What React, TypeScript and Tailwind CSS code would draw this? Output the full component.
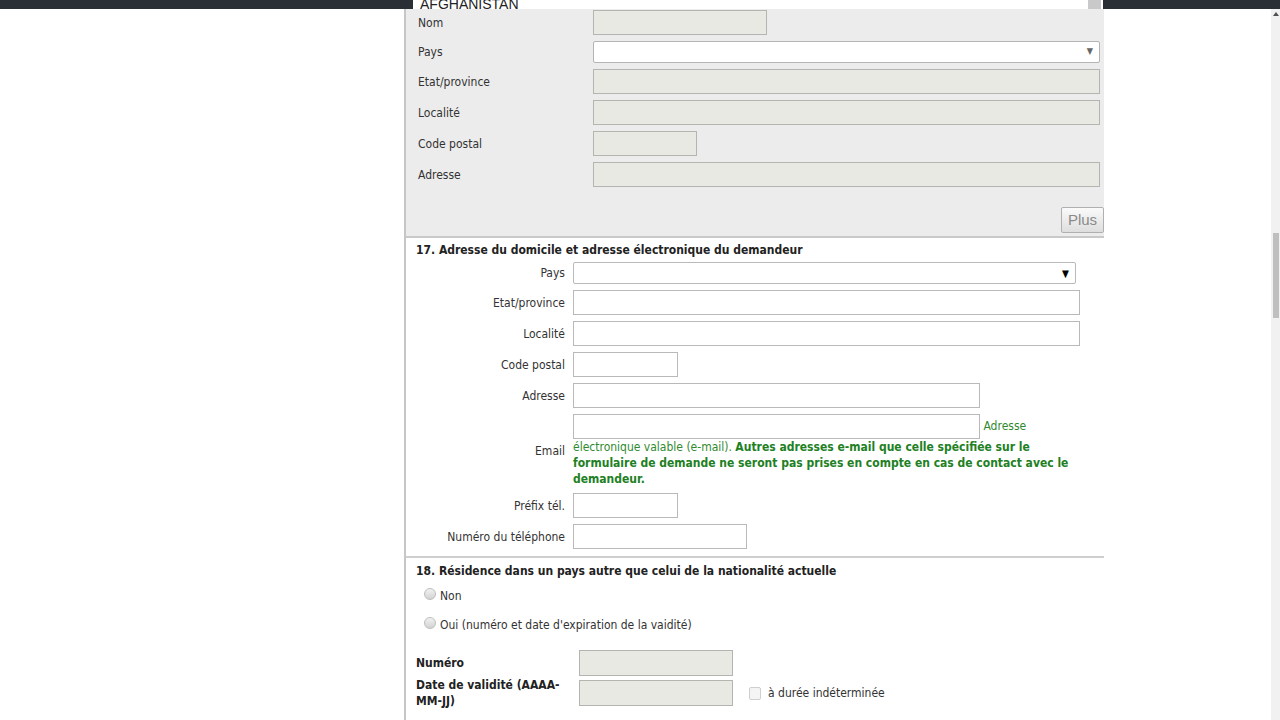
import React from "react";

const FONT = "font-['DejaVu_Sans_Condensed','DejaVu_Sans',sans-serif]";

interface FieldProps {
  w: number;
  h?: number;
  disabled?: boolean;
}

// plain text box, sized by pixel width from the form
const Field = ({ w, h = 25, disabled }: FieldProps) => {
  const widths: Record<number, string> = {
    104: "w-[104px]",
    105: "w-[105px]",
    154: "w-[154px]",
    174: "w-[174px]",
    407: "w-[407px]",
    507: "w-[507px]",
  };
  const heights: Record<number, string> = {
    22: "h-[22px]",
    25: "h-[25px]",
    26: "h-[26px]",
  };
  return (
    <div
      className={`${widths[w]} ${heights[h]} shrink-0 border ${
        disabled ? "bg-[#e9e9e3] border-[#b4b4b0]" : "bg-white border-[#b9b9b9]"
      }`}
    />
  );
};

const SelectBox = ({ dark }: { dark?: boolean }) => (
  <div
    className={`flex h-[22px] shrink-0 items-center justify-end rounded-[2px] border bg-white ${
      dark
        ? "w-[503px] border-[#b9b9b9] pr-[6px] text-[10px] text-black"
        : "w-[507px] border-[#b4b4b4] pr-[6px] text-[9px] text-[#666]"
    }`}
  >
    ▼
  </div>
);

const TopRow = ({ label, children }: { label: string; children: React.ReactNode }) => (
  <div className="flex items-center">
    <div className="w-[175px] text-[12px] text-[#333]">{label}</div>
    {children}
  </div>
);

const Row = ({ label, children }: { label: string; children: React.ReactNode }) => (
  <div className="flex items-center">
    <div className="w-[159px] shrink-0 text-right text-[12px] text-[#333]">{label}</div>
    <div className="ml-[8px]">{children}</div>
  </div>
);

const Radio = () => (
  <span className="mb-[4px] inline-block h-[12px] w-[12px] shrink-0 rounded-full border border-[#bdbdbd] bg-gradient-to-b from-[#f2f2f2] to-[#d2d2d2]" />
);

export default function App() {
  return (
    <div className={`flex h-[720px] w-[1280px] flex-col overflow-hidden bg-white ${FONT}`}>
      {/* dark strip with the open country list peeking through */}
      <div className="flex h-[9px] shrink-0 bg-[#2a2e35]">
        <div className="ml-[413px] flex w-[690px] overflow-hidden bg-white">
          <div className="-mt-[4px] pl-[7px] font-['Liberation_Sans',sans-serif] text-[14px] leading-[16px] text-[#222]">
            AFGHANISTAN
          </div>
          <div className="ml-auto mr-[2px] w-[13px] bg-[#c9c9c9]" />
        </div>
      </div>

      <div className="flex min-h-0 flex-1">
        <div className="w-[404px] shrink-0" />

        <div className="w-[700px] shrink-0 border-l-2 border-[#c6c6c6]">
          {/* co-applicant block (disabled) */}
          <div className="border-b-2 border-[#c9c9c9] bg-[#ececec] pb-[3px] pl-[12px] pt-[1px]">
            <div className="flex flex-col gap-[6px]">
              <TopRow label="Nom">
                <Field w={174} disabled />
              </TopRow>
              <TopRow label="Pays">
                <SelectBox />
              </TopRow>
              <TopRow label="Etat/province">
                <Field w={507} disabled />
              </TopRow>
              <TopRow label="Localité">
                <Field w={507} disabled />
              </TopRow>
              <TopRow label="Code postal">
                <Field w={104} disabled />
              </TopRow>
              <TopRow label="Adresse">
                <Field w={507} disabled />
              </TopRow>
            </div>
            <div className="mt-[20px] flex justify-end">
              <button className="h-[26px] w-[43px] rounded-[2px] border border-[#b0b0b0] bg-gradient-to-b from-[#fafafa] to-[#dedede] font-['Liberation_Sans',sans-serif] text-[15px] text-[#8a8a8a]">
                Plus
              </button>
            </div>
          </div>

          {/* 17 */}
          <div className="border-b-2 border-[#cfcfcf] pb-[7px] pt-[5px]">
            <div className="mb-[4px] pl-[10px] text-[12px] font-bold leading-[15px] text-[#222]">
              17. Adresse du domicile et adresse électronique du demandeur
            </div>
            <div className="flex flex-col gap-[6px]">
              <Row label="Pays">
                <SelectBox dark />
              </Row>
              <Row label="Etat/province">
                <Field w={507} />
              </Row>
              <Row label="Localité">
                <Field w={507} />
              </Row>
              <Row label="Code postal">
                <Field w={105} />
              </Row>
              <Row label="Adresse">
                <Field w={407} />
              </Row>
              <Row label="Email">
                <div className="w-[507px] text-[12px] leading-[16px] text-[#2f8a2f]">
                  <span className="inline-block h-[25px] w-[407px] border border-[#b9b9b9] bg-white align-middle" />{" "}
                  Adresse électronique valable (e-mail).{" "}
                  <span className="font-bold text-[#21801f]">
                    Autres adresses e-mail que celle spécifiée sur le formulaire de demande ne seront pas prises en
                    compte en cas de contact avec le demandeur.
                  </span>
                </div>
              </Row>
              <Row label="Préfix tél.">
                <Field w={105} />
              </Row>
              <Row label="Numéro du téléphone">
                <Field w={174} />
              </Row>
            </div>
          </div>

          {/* 18 */}
          <div className="pl-[10px] pt-[6px] text-[12px] text-[#333]">
            <div className="font-bold leading-[15px] text-[#222]">
              18. Résidence dans un pays autre que celui de la nationalité actuelle
            </div>
            <div className="mt-[8px] flex items-center gap-[4px] pl-[8px]">
              <Radio />
              <span>Non</span>
            </div>
            <div className="mt-[11px] flex items-center gap-[4px] pl-[8px]">
              <Radio />
              <span>Oui (numéro et date d'expiration de la vaidité)</span>
            </div>

            <div className="mt-[16px] flex flex-col gap-[1px]">
              <div className="flex items-center">
                <div className="w-[163px] shrink-0 pr-[10px] font-bold text-[#222]">Numéro</div>
                <Field w={154} h={26} disabled />
              </div>
              <div className="flex items-center">
                <div className="w-[163px] shrink-0 pr-[10px] font-bold leading-[16px] text-[#222]">
                  Date de validité (AAAA-MM-JJ)
                </div>
                <Field w={154} h={26} disabled />
                <span className="ml-[16px] h-[13px] w-[12px] rounded-[2px] border border-[#cfcfcf] bg-[#f4f4f4]" />
                <span className="ml-[7px]">à durée indéterminée</span>
              </div>
            </div>
          </div>
        </div>

        <div className="flex-1" />

        {/* page scrollbar */}
        <div className="flex w-[9px] shrink-0 flex-col items-center bg-[#f1f1f1]">
          <svg width="6" height="4" viewBox="0 0 6 4" className="mt-[3px]">
            <path d="M0 4 L3 0 L6 4 Z" fill="#505050" />
          </svg>
          <div className="mt-[217px] h-[85px] w-[6px] bg-[#bfbfbf]" />
        </div>
      </div>
    </div>
  );
}
